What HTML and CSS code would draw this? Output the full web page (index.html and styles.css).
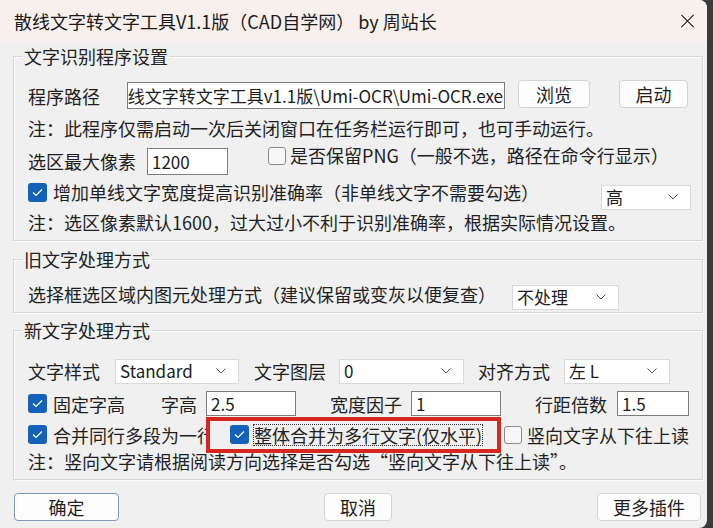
FILE: index.html
```html
<!DOCTYPE html>
<html lang="zh-CN">
<head>
  <meta charset="UTF-8">
  <title>散线文字转文字工具</title>
  <link rel="stylesheet" href="styles.css">
</head>
<body>
  <div class="window">
    <div class="titlebar">
      <span class="title">散线文字转文字工具V1.1版（CAD自学网） by 周站长</span>
      <svg class="close" width="16" height="16" viewBox="0 0 16 16">
        <path d="M1 1 L15 15 M15 1 L1 15" stroke="#1a1a1a" stroke-width="1.2" fill="none"/>
      </svg>
    </div>

    <div class="content">
      <fieldset class="group g1">
        <legend>文字识别程序设置</legend>
        <div class="row r-path">
          <span class="label">程序路径</span>
          <div class="input path"><span>线文字转文字工具v1.1版\Umi-OCR\Umi-OCR.exe</span></div>
          <button class="btn browse">浏览</button>
          <button class="btn start">启动</button>
        </div>
        <div class="row note n1">注：此程序仅需启动一次后关闭窗口在任务栏运行即可，也可手动运行。</div>
        <div class="row r-pix">
          <span class="label">选区最大像素</span>
          <div class="input pix">1200</div>
          <span class="check off keep"></span>
          <span class="clabel">是否保留PNG（一般不选，路径在命令行显示）</span>
        </div>
        <div class="row r-wide">
          <span class="check on"><svg width="19" height="19" viewBox="0 0 19 19"><path d="M5 9.5 L8 12.5 L14 6.5" stroke="#fff" stroke-width="1.2" fill="none"/></svg></span>
          <span class="clabel">增加单线文字宽度提高识别准确率（非单线文字不需要勾选）</span>
          <div class="select level"><span>高</span><svg width="10" height="6" viewBox="0 0 10 6"><path d="M0.5 0.5 L5 5 L9.5 0.5" stroke="#555" fill="none"/></svg></div>
        </div>
        <div class="row note n2">注：选区像素默认1600，过大过小不利于识别准确率，根据实际情况设置。</div>
      </fieldset>

      <fieldset class="group g2">
        <legend>旧文字处理方式</legend>
        <div class="row r-old">
          <span class="label">选择框选区域内图元处理方式（建议保留或变灰以便复查）</span>
          <div class="select old"><span>不处理</span><svg width="10" height="6" viewBox="0 0 10 6"><path d="M0.5 0.5 L5 5 L9.5 0.5" stroke="#555" fill="none"/></svg></div>
        </div>
      </fieldset>

      <fieldset class="group g3">
        <legend>新文字处理方式</legend>
        <div class="row r-style">
          <span class="label">文字样式</span>
          <div class="select style"><span>Standard</span><svg width="10" height="6" viewBox="0 0 10 6"><path d="M0.5 0.5 L5 5 L9.5 0.5" stroke="#555" fill="none"/></svg></div>
          <span class="label">文字图层</span>
          <div class="select layer"><span>0</span><svg width="10" height="6" viewBox="0 0 10 6"><path d="M0.5 0.5 L5 5 L9.5 0.5" stroke="#555" fill="none"/></svg></div>
          <span class="label">对齐方式</span>
          <div class="select align"><span>左 L</span><svg width="10" height="6" viewBox="0 0 10 6"><path d="M0.5 0.5 L5 5 L9.5 0.5" stroke="#555" fill="none"/></svg></div>
        </div>
        <div class="row r-size">
          <span class="check on"><svg width="19" height="19" viewBox="0 0 19 19"><path d="M5 9.5 L8 12.5 L14 6.5" stroke="#fff" stroke-width="1.2" fill="none"/></svg></span>
          <span class="clabel">固定字高</span>
          <span class="label h">字高</span>
          <div class="input num">2.5</div>
          <span class="label">宽度因子</span>
          <div class="input num">1</div>
          <span class="label">行距倍数</span>
          <div class="input num small">1.5</div>
        </div>
        <div class="row r-merge">
          <span class="check on"><svg width="19" height="19" viewBox="0 0 19 19"><path d="M5 9.5 L8 12.5 L14 6.5" stroke="#fff" stroke-width="1.2" fill="none"/></svg></span>
          <span class="clabel">合并同行多段为一行</span>
          <span class="mark">
            <span class="check on"><svg width="19" height="19" viewBox="0 0 19 19"><path d="M5 9.5 L8 12.5 L14 6.5" stroke="#fff" stroke-width="1.2" fill="none"/></svg></span>
            <span class="clabel focus">整体合并为多行文字(仅水平)</span>
          </span>
          <span class="check off"></span>
          <span class="clabel">竖向文字从下往上读</span>
        </div>
        <div class="row note n3">注：竖向文字请根据阅读方向选择是否勾选“竖向文字从下往上读”。</div>
      </fieldset>

      <div class="actions">
        <button class="btn ok">确定</button>
        <button class="btn cancel">取消</button>
        <button class="btn more">更多插件</button>
      </div>
    </div>
  </div>
</body>
</html>
```

FILE: styles.css
```css
* {
  box-sizing: border-box;
}

body {
  margin: 0;
  width: 713px;
  height: 528px;
  overflow: hidden;
  background: #3b3b3b;
  font-family: "Noto Sans CJK SC", sans-serif;
  color: #1c1c1c;
}

.window {
  width: 707px;
  height: 528px;
  background: #f0f0f0;
  border-top-right-radius: 8px;
  border-bottom-right-radius: 8px;
  overflow: hidden;
}

.titlebar {
  height: 42px;
  background: #f8f0ed;
  display: flex;
  align-items: center;
  justify-content: space-between;
  padding: 0 12px 0 14px;
}

.title {
  font-size: 18px;
  line-height: 22px;
  color: #1a1a1a;
}

.close {
  width: 15px;
  height: 14px;
}

.content {
  padding: 0 4px 0 13px;
}

.group {
  margin: 0;
  border: 1px solid #d6d6d6;
  box-shadow: inset 1px 1px 0 #fbfbfb, 1px 1px 0 #fbfbfb;
  padding: 0 10px 0 14px;
  min-width: 0;
}

.group legend {
  font-size: 18px;
  line-height: 20px;
  padding: 0 2px;
  margin-left: -6px;
  color: #222;
}

.g1 {
  margin-top: 4px;
  padding-top: 13px;
  padding-bottom: 8px;
}

.g2 {
  margin-top: 8px;
  padding-top: 9px;
  padding-bottom: 2px;
}

.g3 {
  margin-top: 7px;
  padding-top: 16px;
  padding-bottom: 5px;
}

.row {
  display: flex;
  align-items: center;
  font-size: 18px;
  line-height: 20px;
  white-space: nowrap;
}

.label,
.clabel,
.note {
  color: #1f1f1f;
}

.input {
  height: 27px;
  background: #fff;
  border: 1px solid #7d7d7d;
  font-size: 17px;
  line-height: 25px;
  padding: 0 4px;
  overflow: hidden;
}

.select {
  height: 25px;
  background: #fff;
  border: 1px solid #d9d9d9;
  display: flex;
  align-items: center;
  justify-content: space-between;
  padding: 0 12px 0 4px;
  font-size: 17px;
}

.btn {
  height: 28px;
  background: #fdfdfd;
  border: 1px solid #d3d3d3;
  border-radius: 4px;
  font-family: "Noto Sans CJK SC", sans-serif;
  font-size: 18px;
  color: #1f1f1f;
  padding: 0;
}

.check {
  width: 19px;
  height: 19px;
  border-radius: 3px;
  flex: none;
  display: flex;
}

.check.on {
  background: #1560b8;
}

.check.off {
  width: 18px;
  height: 18px;
  border: 1px solid #8a8a8a;
  background: #f7f7f7;
}

/* group 1 */
.r-path {
  height: 33px;
}

.path {
  width: 378px;
  margin-left: 27px;
  display: flex;
  justify-content: flex-end;
  padding: 0 1px;
}

.browse {
  width: 72px;
  margin-left: 13px;
  margin-top: -4px;
}

.start {
  width: 69px;
  margin-left: 29px;
  margin-top: -4px;
}

.n1 {
  height: 32px;
}

.r-pix {
  height: 34px;
}

.pix {
  width: 81px;
  margin-left: 11px;
}

.keep {
  margin-left: 40px;
  margin-top: -10px;
}

.r-pix .clabel {
  margin-left: 4px;
  margin-top: -12px;
}

.r-wide {
  height: 34px;
}

.r-wide .check,
.r-wide .clabel {
  margin-top: -6px;
}

.r-wide .clabel,
.r-size .clabel,
.r-merge .clabel {
  margin-left: 6px;
}

.level {
  width: 90px;
  margin-left: auto;
  margin-right: 1px;
  margin-top: 4px;
}

.n2 {
  height: 20px;
}

/* group 2 */
.r-old {
  height: 32px;
}

.old {
  width: 107px;
  margin-left: 16px;
  margin-top: 6px;
}

/* group 3 */
.r-style {
  height: 30px;
}

.style {
  width: 124px;
  margin: 0 15px;
}

.layer {
  width: 125px;
  margin: 0 14px 0 13px;
}

.align {
  width: 106px;
  margin-left: 14px;
}

.r-size {
  height: 35px;
}

.r-size .h {
  margin-left: 36px;
}

.num {
  width: 90px;
  height: 25px;
  line-height: 23px;
  margin: 0 34px 0 9px;
}

.num.small {
  width: 72px;
  margin: 0 0 0 10px;
}

.r-merge {
  height: 27px;
}

.mark {
  display: flex;
  align-items: center;
  flex: none;
  width: 295px;
  height: 36px;
  margin-left: -9px;
  border: 4px solid #d5261f;
  background: #f0f0f0;
  padding-left: 20px;
}

.focus {
  outline: 1px dotted #333;
  outline-offset: 0;
  line-height: 20px;
}

.mark + .check {
  margin-left: 3px;
}

.r-merge .clabel:last-child {
  margin-left: 5px;
}

.n3 {
  height: 26px;
}

/* bottom buttons */
.actions {
  display: flex;
  justify-content: space-between;
  padding: 13px 2px 0 1px;
}

.ok {
  width: 105px;
  border-color: #7d98b3;
}

.cancel {
  width: 68px;
}

.more {
  width: 104px;
}
```
